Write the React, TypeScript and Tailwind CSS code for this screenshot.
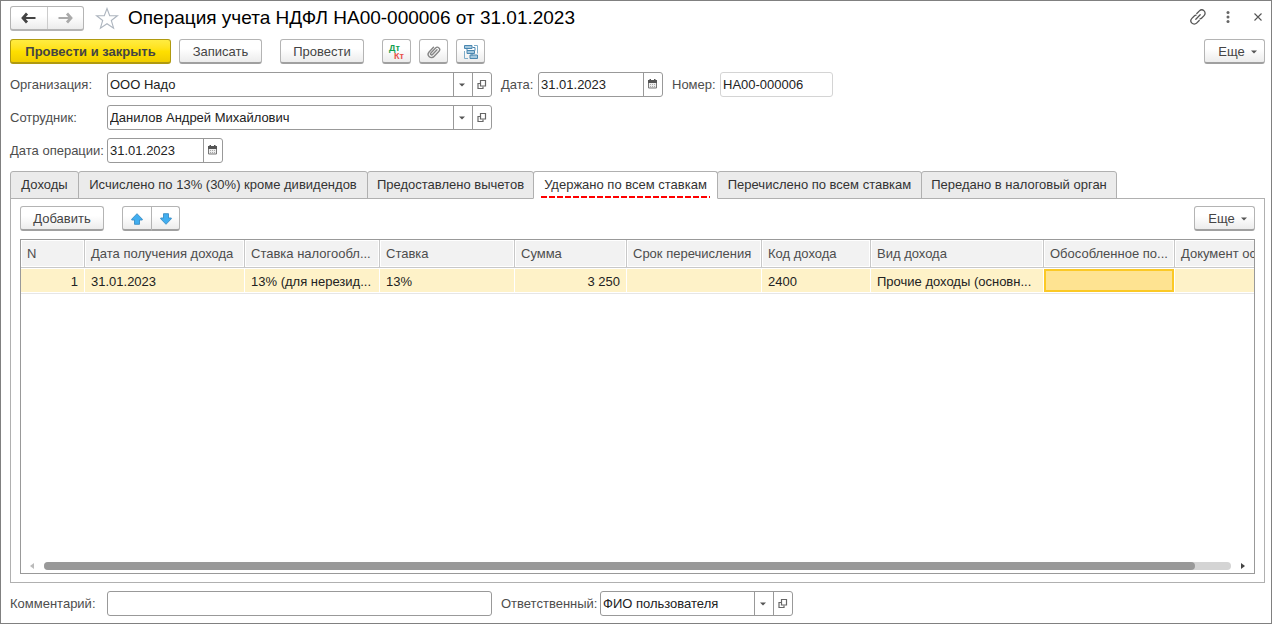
import { useState } from "react";
import type { ReactNode } from "react";
import clsx from "clsx";

const BUTTON =
  "flex h-[25px] shrink-0 items-center justify-center rounded-[3px] border border-[#b4b4b4] border-b-2 border-b-[#a0a0a0] bg-linear-to-b from-white from-40% to-[#ececec] pt-px text-[#444]";

function CaretIcon() {
  return (
    <svg width="6" height="4" viewBox="0 0 6 4" fill="#555" aria-hidden="true">
      <path d="M0 0.5h6L3 3.5z" />
    </svg>
  );
}

function OpenIcon() {
  return (
    <svg width="10" height="10" viewBox="0 0 10 10" fill="none" stroke="#666" aria-hidden="true">
      <path d="M3.500 0.500h5v5.500h-5z" strokeWidth="1.200" />
      <path d="M3 3.500h-2v5h5v-2" strokeWidth="1.200" />
    </svg>
  );
}

function CalendarIcon() {
  return (
    <svg width="9" height="10" viewBox="0 0 9 10" aria-hidden="true">
      <path d="M0.5 2.5h8v6.500h-8z" fill="#eee" stroke="#777" />
      <path d="M0 1h9v3H0z" fill="#555" />
      <path d="M1.500 0h1.500v2h-1.500zM6 0h1.500v2H6z" fill="#555" />
      <path d="M2 5.500h5M2 7.500h5" stroke="#aaa" strokeDasharray="1 1" />
    </svg>
  );
}

function NavArrow({ color, flip }: { color: string; flip?: boolean }) {
  return (
    <svg
      width="15"
      height="12"
      viewBox="0 0 15 12"
      fill="none"
      stroke={color}
      strokeWidth="2.200"
      className={clsx(flip && "rotate-180")}
      aria-hidden="true"
    >
      <path d="M2 6h12.500" />
      <path d="M6 1.500L2 6L6 10.500" strokeWidth="2.800" />
    </svg>
  );
}

function MoveArrow({ down }: { down?: boolean }) {
  return (
    <svg width="12" height="12" viewBox="0 0 12 12" className={clsx(down && "rotate-180")} aria-hidden="true">
      <path
        d="M6 0.700L11.300 6.200V7H8.500v4.300H3.500V7H0.700V6.200z"
        fill="#41aef0"
        stroke="#3a8dc4"
        strokeWidth="0.900"
        strokeLinejoin="round"
      />
    </svg>
  );
}

function StarIcon() {
  return (
    <svg width="24" height="23" viewBox="0 0 24 23" fill="#fff" stroke="#adb5bf" strokeWidth="1.100" aria-hidden="true">
      <path d="M12 1.500l2.700 7.300h7.700l-6.100 4.700 2.300 7.700L12 16.700l-6.600 4.500 2.300-7.700-6.100-4.700h7.700z" />
    </svg>
  );
}

function LinkIcon() {
  return (
    <svg width="16" height="16" viewBox="0 0 16 16" fill="none" stroke="#555" strokeWidth="1.300" strokeLinecap="round" aria-hidden="true">
      <path d="M5.800 10.200L10.200 5.800" />
      <path d="M6.800 4.500L9.400 1.900a3.200 3.200 0 0 1 4.700 4.700L11.500 9.200a2.500 2.500 0 0 1-1.500 .7" />
      <path d="M9.200 11.500L6.600 14.100a3.200 3.200 0 0 1-4.700-4.700L4.500 6.800a2.500 2.500 0 0 1 1.500-.7" />
    </svg>
  );
}

function PaperclipIcon() {
  return (
    <svg width="14" height="14" viewBox="0 0 14 14" fill="none" stroke="#858585" strokeWidth="1.400" strokeLinecap="round" aria-hidden="true">
      <path d="M10 4.800L5.500 9.500a1.100 1.100 0 0 1-1.600-1.600L8.600 3a2.300 2.300 0 0 1 3.400 3.200L7 11.500a3.300 3.300 0 0 1-4.900-4.500L6.500 2.300" />
    </svg>
  );
}

function StructureIcon() {
  return (
    <svg width="14" height="14" viewBox="0 0 14 14" fill="none" aria-hidden="true">
      <path d="M0.500 6v7.500h3.500M10 0.500h3.500v8" stroke="#7fadc9" />
      <path d="M0.500 0.500h7.500v3h-7.500zM3 5.500h7.500v3H3zM6 10h7.500v3.500H6z" fill="#a5c8de" stroke="#4a87b0" />
      <path d="M3 3.500v2M8 8.500v2M8.500 2.500h2.500v3" stroke="#4a87b0" />
    </svg>
  );
}

const PART = "flex shrink-0 items-center justify-center border-l border-[#999]";

type FieldProps = {
  id: string;
  value?: string;
  className: string;
  kind?: "text" | "combo" | "date" | "readonly";
};

function Field({ id, value = "", className, kind = "text" }: FieldProps) {
  return (
    <div
      className={clsx(
        "flex h-[25px] overflow-hidden rounded-[3px] border bg-white",
        kind === "readonly" ? "border-[#d4d4d4]" : "border-[#999]",
        className,
      )}
    >
      <input
        id={id}
        defaultValue={value}
        readOnly={kind === "readonly"}
        className="min-w-0 flex-1 px-0.5 text-[#222] outline-none"
      />
      {kind === "combo" && (
        <>
          <button type="button" aria-label="Выбрать" className={clsx(PART, "w-[19px] pr-0.5")}>
            <CaretIcon />
          </button>
          <button type="button" aria-label="Открыть" className={clsx(PART, "w-[19px]")}>
            <OpenIcon />
          </button>
        </>
      )}
      {kind === "date" && (
        <button type="button" aria-label="Календарь" className={clsx(PART, "w-[19px] pr-0.5 pb-0.5")}>
          <CalendarIcon />
        </button>
      )}
    </div>
  );
}

function Label({ htmlFor, className, children }: { htmlFor: string; className?: string; children: ReactNode }) {
  return (
    <label htmlFor={htmlFor} className={clsx("shrink-0 whitespace-nowrap text-[#4d4d4d]", className)}>
      {children}
    </label>
  );
}

function MoreButton() {
  return (
    <button type="button" className={clsx(BUTTON, "ml-auto w-[61px] gap-1.5 pl-1.5")}>
      Еще
      <CaretIcon />
    </button>
  );
}

const TABS = [
  { title: "Доходы", width: "w-[69px]" },
  { title: "Исчислено по 13% (30%) кроме дивидендов", width: "w-[290px]" },
  { title: "Предоставлено вычетов", width: "w-[167px]" },
  { title: "Удержано по всем ставкам", width: "w-[185px]" },
  { title: "Перечислено по всем ставкам", width: "w-[205px]" },
  { title: "Передано в налоговый орган", width: "w-[196px]" },
];

const COLUMNS = [
  { title: "N", width: "w-[64px]", value: "1", right: true },
  { title: "Дата получения дохода", width: "w-[160px]", value: "31.01.2023" },
  { title: "Ставка налогообл...", width: "w-[135px]", value: "13% (для нерезид..." },
  { title: "Ставка", width: "w-[135px]", value: "13%" },
  { title: "Сумма", width: "w-[112px]", value: "3 250", right: true },
  { title: "Срок перечисления", width: "w-[135px]", value: "" },
  { title: "Код дохода", width: "w-[109px]", value: "2400" },
  { title: "Вид дохода", width: "w-[173px]", value: "Прочие доходы (основн..." },
  { title: "Обособленное по...", width: "w-[131px]", value: "", active: true },
  { title: "Документ ос", width: "w-[100px]", value: "" },
];

export default function App() {
  const [tab, setTab] = useState(3);

  return (
    <main className="flex min-h-screen flex-col gap-2 border border-[#808080] bg-white pt-1 pr-1.5 pb-[7px] pl-[9px] font-['Liberation_Sans',Arial,sans-serif] text-[13px] leading-4 text-[#333]">
      <header className="flex h-[26px] items-center">
        <div className="flex h-[25px] w-[74px] shrink-0 overflow-hidden rounded-[3px] border border-b-2 border-[#b4b4b4] bg-linear-to-b from-white from-40% to-[#ececec]">
          <button type="button" aria-label="Назад" className="flex flex-1 items-center justify-center">
            <NavArrow color="#444" />
          </button>
          <button type="button" aria-label="Вперед" className="flex flex-1 items-center justify-center border-l border-[#ccc]">
            <NavArrow color="#aaa" flip />
          </button>
        </div>
        <button type="button" aria-label="Добавить в избранное" className="ml-[11px] shrink-0">
          <StarIcon />
        </button>
        <h1 className="ml-[9px] text-[19px] leading-6 whitespace-nowrap text-black">
          Операция учета НДФЛ НА00-000006 от 31.01.2023
        </h1>
        <div className="ml-auto flex items-center pb-[3px]">
          <button type="button" aria-label="Получить ссылку">
            <LinkIcon />
          </button>
          <button type="button" aria-label="Меню" className="ml-5">
            <svg width="4" height="12" viewBox="0 0 4 12" fill="#666" aria-hidden="true">
              <circle cx="2" cy="1.500" r="1.500" />
              <circle cx="2" cy="6" r="1.500" />
              <circle cx="2" cy="10.500" r="1.500" />
            </svg>
          </button>
          <button type="button" aria-label="Закрыть" className="mr-[3px] ml-6">
            <svg width="8" height="8" viewBox="0 0 8 8" stroke="#555" strokeWidth="1.100" aria-hidden="true">
              <path d="M0.500 0.500l7 7M7.500 0.500l-7 7" />
            </svg>
          </button>
        </div>
      </header>

      <div className="flex">
        <button
          type="button"
          className="flex h-[25px] w-[161px] shrink-0 items-center justify-center rounded-[3px] border border-b-2 border-[#b09a10] bg-linear-to-b from-[#ffec40] via-[#ffe000] to-[#f0cd00] pt-px font-bold text-[#444]"
        >
          Провести и закрыть
        </button>
        <button type="button" className={clsx(BUTTON, "ml-2 w-[83px]")}>
          Записать
        </button>
        <button type="button" className={clsx(BUTTON, "ml-[18px] w-[84px]")}>
          Провести
        </button>
        <button
          type="button"
          aria-label="Дебет и кредит"
          className={clsx(BUTTON, "ml-[18px] w-[29px] flex-col px-1.5 text-[9px] leading-[8px] font-bold")}
        >
          <span className="self-start text-[#12a150]">Дт</span>
          <span className="self-end text-[#e8504a]">Кт</span>
        </button>
        <button type="button" aria-label="Присоединенные файлы" className={clsx(BUTTON, "ml-2 w-[29px]")}>
          <PaperclipIcon />
        </button>
        <button type="button" aria-label="Структура подчиненности" className={clsx(BUTTON, "ml-2 w-[29px]")}>
          <StructureIcon />
        </button>
        <MoreButton />
      </div>

      <div className="flex items-center">
        <Label htmlFor="organization" className="w-[97px]">Организация:</Label>
        <Field id="organization" kind="combo" value="ООО Надо" className="w-[385px]" />
        <Label htmlFor="date" className="ml-[9px] w-[37px]">Дата:</Label>
        <Field id="date" kind="date" value="31.01.2023" className="w-[125px]" />
        <Label htmlFor="number" className="ml-[9px] w-12">Номер:</Label>
        <Field id="number" kind="readonly" value="НА00-000006" className="w-[113px]" />
      </div>
      <div className="flex items-center">
        <Label htmlFor="employee" className="w-[97px]">Сотрудник:</Label>
        <Field id="employee" kind="combo" value="Данилов Андрей Михайлович" className="w-[385px]" />
      </div>
      <div className="flex items-center">
        <Label htmlFor="operation-date" className="w-[97px]">Дата операции:</Label>
        <Field id="operation-date" kind="date" value="31.01.2023" className="w-[116px]" />
      </div>

      <section className="flex flex-1 flex-col">
        <div role="tablist" className="flex">
          {TABS.map((item, index) => (
            <button
              key={item.title}
              type="button"
              role="tab"
              aria-selected={tab === index}
              onClick={() => setTab(index)}
              className={clsx(
                "-mr-px -mb-px flex h-7 shrink-0 flex-col items-stretch rounded-t-[3px] border border-[#b0b0b0] px-[7px] pt-[5px] whitespace-nowrap text-[#333]",
                item.width,
                tab === index ? "z-10 border-b-white bg-white" : "bg-[#ebebeb]",
              )}
            >
              <span>{item.title}</span>
              {tab === index && (
                <span className="mt-[3px] h-0.5 bg-[repeating-linear-gradient(90deg,#f00_0_6px,transparent_6px_8px)]" />
              )}
            </button>
          ))}
        </div>

        <div role="tabpanel" className="flex flex-1 flex-col gap-2 border border-[#b0b0b0] px-[9px] pt-[7px] pb-2">
          <div className="flex">
            <button type="button" className={clsx(BUTTON, "w-[84px]")}>
              Добавить
            </button>
            <div className="ml-[18px] flex">
              <button type="button" aria-label="Переместить вверх" className={clsx(BUTTON, "w-[30px] rounded-r-none")}>
                <MoveArrow />
              </button>
              <button type="button" aria-label="Переместить вниз" className={clsx(BUTTON, "-ml-px w-[29px] rounded-l-none")}>
                <MoveArrow down />
              </button>
            </div>
            <MoreButton />
          </div>

          <div className="flex flex-1 flex-col justify-between border border-[#999]">
            <div className="grid overflow-hidden">
              <table className="w-[1254px] min-w-full table-fixed border-separate border-spacing-0">
                <thead>
                  <tr>
                    {COLUMNS.map((column) => (
                      <th
                        key={column.title}
                        scope="col"
                        className={clsx(
                          "h-7 border-r border-b border-[#c8c8c8] bg-[#f2f2f2] p-0 text-left font-normal whitespace-nowrap text-[#4d4d4d] shadow-[inset_1px_1px_0_#fff,inset_-1px_-1px_0_#fff]",
                          column.width,
                        )}
                      >
                        <div className="overflow-hidden px-1.5">{column.title}</div>
                      </th>
                    ))}
                  </tr>
                </thead>
                <tbody>
                  <tr>
                    {COLUMNS.map((column) => (
                      <td
                        key={column.title}
                        className="h-[26px] border-b border-[#e6e6e6] p-0 whitespace-nowrap text-[#222]"
                      >
                        <div
                          className={clsx(
                            "flex h-[25px] items-center overflow-hidden border-y border-r border-white",
                            column.active ? "bg-[#fee391]" : "bg-[#fef2c8]",
                            column.right && "justify-end",
                          )}
                        >
                          {column.active ? (
                            <div className="h-full flex-1 border-2 border-[#fbc926]" />
                          ) : (
                            <span className="px-1.5 pt-0.5">{column.value}</span>
                          )}
                        </div>
                      </td>
                    ))}
                  </tr>
                </tbody>
              </table>
            </div>

            <div className="flex h-[15px] items-center px-[9px]">
              <svg width="4" height="6" viewBox="0 0 4 6" fill="#bbb" aria-hidden="true">
                <path d="M4 0v6L0 3z" />
              </svg>
              <div className="mx-[10px] h-2 flex-1 rounded-full bg-[#d4d4d4]">
                <div className="h-2 w-[97%] rounded-full bg-[#999]" />
              </div>
              <svg width="4" height="6" viewBox="0 0 4 6" fill="#444" aria-hidden="true">
                <path d="M0 0v6l4-3z" />
              </svg>
            </div>
          </div>
        </div>
      </section>

      <footer className="flex items-center">
        <Label htmlFor="comment" className="w-[97px]">Комментарий:</Label>
        <Field id="comment" className="w-[385px]" />
        <Label htmlFor="responsible" className="ml-[9px] w-[99px]">Ответственный:</Label>
        <Field id="responsible" kind="combo" value="ФИО пользователя" className="w-[193px]" />
      </footer>
    </main>
  );
}
